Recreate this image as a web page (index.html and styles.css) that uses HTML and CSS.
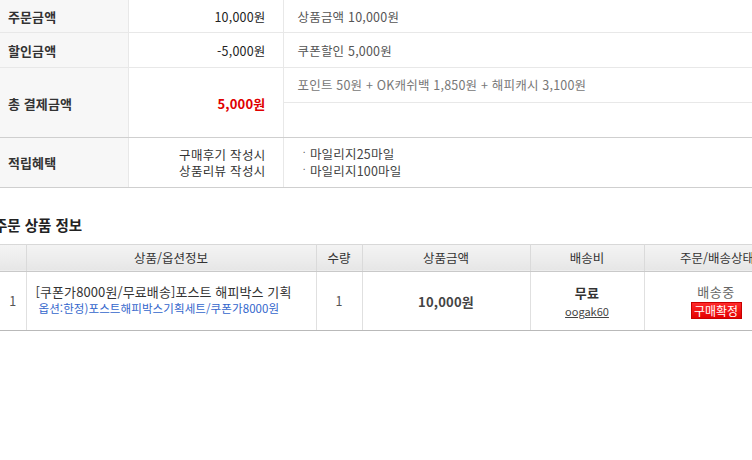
FILE: index.html
```html
<!DOCTYPE html>
<html lang="ko">
<head>
<meta charset="utf-8">
<title>주문 상세</title>
<link rel="stylesheet" href="styles.css">
</head>
<body>
<div class="page">
  <table class="summary">
    <colgroup><col class="c1"><col class="c2"><col class="c3"></colgroup>
    <tr class="r1">
      <th>주문금액</th>
      <td class="amt">10,000원</td>
      <td class="desc">상품금액 10,000원</td>
    </tr>
    <tr class="r2">
      <th>할인금액</th>
      <td class="amt">-5,000원</td>
      <td class="desc">쿠폰할인 5,000원</td>
    </tr>
    <tr class="r3 strong">
      <th rowspan="2">총 결제금액</th>
      <td rowspan="2" class="amt total">5,000원</td>
      <td class="desc light">포인트 50원 + OK캐쉬백 1,850원 + 해피캐시 3,100원</td>
    </tr>
    <tr class="r3b strong">
      <td class="desc"></td>
    </tr>
    <tr class="r4 strong">
      <th>적립혜택</th>
      <td class="amt multi">구매후기 작성시<br>상품리뷰 작성시</td>
      <td class="desc multi"><span class="dot">ㆍ</span>마일리지25마일<br><span class="dot">ㆍ</span>마일리지100마일</td>
    </tr>
  </table>

  <h2 class="section-title">주문 상품 정보</h2>

  <table class="items">
    <colgroup>
      <col class="i1"><col class="i2"><col class="i3"><col class="i4"><col class="i5"><col class="i6">
    </colgroup>
    <thead>
      <tr>
        <th></th>
        <th>상품/옵션정보</th>
        <th>수량</th>
        <th>상품금액</th>
        <th>배송비</th>
        <th>주문/배송상태</th>
      </tr>
    </thead>
    <tbody>
      <tr>
        <td class="no">1</td>
        <td class="product">
          <div class="pname">[쿠폰가8000원/무료배송]포스트 해피박스 기획</div>
          <div class="popt">옵션:한정)포스트해피박스기획세트/쿠폰가8000원</div>
        </td>
        <td class="qty">1</td>
        <td class="price">10,000원</td>
        <td class="ship">
          <div class="free">무료</div>
          <a class="seller" href="#">oogak60</a>
        </td>
        <td class="state">
          <div class="status">배송중</div>
          <span class="confirm">구매확정</span>
        </td>
      </tr>
    </tbody>
  </table>
</div>
</body>
</html>
```

FILE: styles.css
```css
* { box-sizing: border-box; }
html, body { margin: 0; padding: 0; background: #fff; }
body {
  width: 752px;
  height: 460px;
  overflow: hidden;
  font-family: "Noto Sans CJK KR", "Noto Sans", sans-serif;
  font-size: 12.5px;
  letter-spacing: 0.2px;
  color: #333;
}
.page { width: 752px; overflow: hidden; }

table { border-collapse: collapse; table-layout: fixed; }

/* summary table */
.summary { width: 752px; }
.summary .c1 { width: 128px; }
.summary .c2 { width: 155px; }
.summary th, .summary td {
  padding: 0;
  border-right: 1px solid #e8e8e8;
  border-bottom: 1px solid #e8e8e8;
  vertical-align: middle;
  line-height: 17px;
}
.summary td:last-child { border-right: none; }
.summary th {
  background: #f7f7f7;
  text-align: left;
  padding-left: 8px;
  font-weight: bold;
  color: #333;
  font-size: 13px;
  letter-spacing: 0.1px;
}
.summary .r1 th, .summary .r1 td { height: 32px; padding-top: 1px; }
.summary .r2 th, .summary .r2 td { height: 35px; padding-top: 1px; }
.summary .r3 td.desc { height: 35px; padding-bottom: 1px; }
.summary .r3b td.desc { height: 35px; }
.summary .r3 th, .summary .r3 td.amt { border-bottom: 1px solid #cfcfcf; padding-top: 3px; }
.summary .r3b td { border-bottom: 1px solid #cfcfcf; }
.summary .r4 th, .summary .r4 td { height: 50px; border-bottom: 1px solid #cfcfcf; }
.summary .amt {
  text-align: right;
  padding-right: 17px;
  color: #222;
}
.summary .amt.total { color: #e00000; font-weight: bold; font-size: 13px; }
.summary .desc { padding-left: 14px; color: #555; }
.summary .desc.light { color: #777; }
.summary .multi { padding-top: 1px; line-height: 16px; }
.summary .desc.multi { padding-left: 16px; color: #444; }
.summary .amt.multi { color: #333; letter-spacing: 0.3px; }
.dot { font-size: 10px; position: relative; top: -3px; margin-right: 1px; }

/* section title */
.section-title {
  margin: 27px 0 9px -6px;
  font-size: 14.5px;
  font-weight: bold;
  color: #222;
  line-height: 20px;
  letter-spacing: 0;
}

/* items table */
.items { width: 790px; }
.items .i1 { width: 26px; }
.items .i2 { width: 290px; }
.items .i3 { width: 46px; }
.items .i4 { width: 168px; }
.items .i5 { width: 114px; }
.items .i6 { width: 146px; }
.items thead th {
  height: 27px;
  padding: 0;
  font-weight: normal;
  color: #333;
  background: linear-gradient(#f4f4f4, #e6e6e6);
  border-top: 1px solid #d8d8d8;
  border-bottom: 1px solid #c9c9c9;
  border-right: 1px solid #dadada;
  text-align: center;
  vertical-align: middle;
  line-height: 17px;
  letter-spacing: 0;
}
.items tbody td {
  height: 59px;
  padding: 0;
  border-right: 1px solid #e0e0e0;
  border-bottom: 1px solid #b9b9b9;
  text-align: center;
  vertical-align: middle;
  line-height: 17px;
}
.items .no { color: #555; }
.items .product { text-align: left; padding-left: 9px; padding-bottom: 2px; }
.items .pname { color: #333; font-size: 13px; letter-spacing: 0.1px; }
.items .popt { color: #3366cc; font-size: 11.5px; line-height: 16px; padding-left: 3px; letter-spacing: 0.1px; }
.items .qty { color: #555; }
.items .price { font-weight: bold; color: #444; font-size: 13px; padding-top: 2px; }
.items .ship { padding-top: 2px; }
.items .free { font-weight: bold; color: #333; font-size: 13px; line-height: 18px; }
.items .seller { color: #444; font-size: 11px; text-decoration: underline; line-height: 15px; letter-spacing: 0; }
.items .state { padding-top: 1px; }
.items .status { color: #666; font-size: 13px; line-height: 18px; padding-right: 2px; letter-spacing: 0.5px; }
.items .confirm {
  display: inline-block;
  margin-top: 1px;
  width: 51px;
  height: 17px;
  line-height: 15px;
  background: linear-gradient(#ff2a2a, #e40000);
  border: 1px solid #c80000;
  color: #fff;
  font-size: 12px;
  letter-spacing: 0;
  text-align: center;
  margin-right: 2px;
}
```
